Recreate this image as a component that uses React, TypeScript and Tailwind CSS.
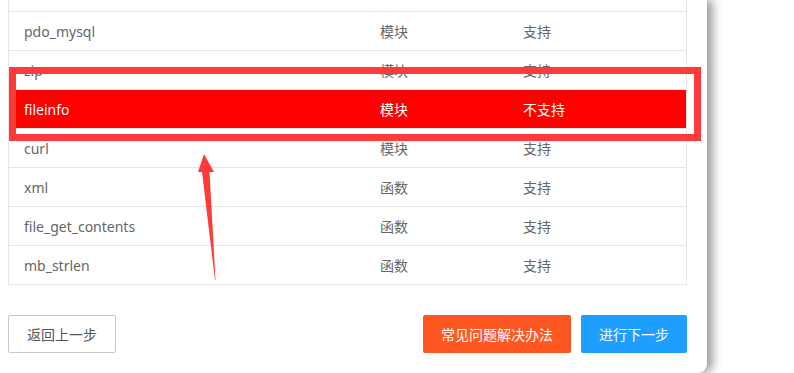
import React from "react";

const rows = [
  { name: "pdo_mysql", type: "模块", ok: true },
  { name: "zip", type: "模块", ok: true },
  { name: "fileinfo", type: "模块", ok: false },
  { name: "curl", type: "模块", ok: true },
  { name: "xml", type: "函数", ok: true },
  { name: "file_get_contents", type: "函数", ok: true },
  { name: "mb_strlen", type: "函数", ok: true },
];

export default function App() {
  return (
    <div
      className="relative h-[373px] w-[794px] overflow-hidden bg-white text-[14px] text-[#666]"
      style={{ fontFamily: '"Noto Sans", "Noto Sans CJK SC", sans-serif' }}
    >
      <div className="-ml-[12px] w-[719px] rounded-br-[9px] bg-white px-5 pb-5 shadow-[6px_0_10px_rgba(0,0,0,0.38)]">
        <div className="border-x border-b border-[#e6e6e6]">
          {/* tail of the row above, scrolled out of view */}
          <div className="h-[11px]" />
          {rows.map((r) => (
            <div
              key={r.name}
              className={
                "flex h-[39px] items-center border-t border-[#e6e6e6] " +
                (r.ok ? "" : "bg-[#ff0000] text-white")
              }
            >
              <div className="w-[371px] pl-[15px]">{r.name}</div>
              <div className="w-[143px]">{r.type}</div>
              <div>{r.ok ? "支持" : "不支持"}</div>
            </div>
          ))}
        </div>
        <div className="mt-[30px] flex items-center">
          <button className="h-[38px] w-[108px] rounded-[2px] border border-[#c9c9c9] bg-white text-[#555]">
            返回上一步
          </button>
          <div className="flex-1" />
          <button className="h-[38px] w-[148px] rounded-[2px] bg-[#ff5722] text-white">
            常见问题解决办法
          </button>
          <button className="ml-[10px] h-[38px] w-[106px] rounded-[2px] bg-[#1e9fff] text-white">
            进行下一步
          </button>
        </div>
      </div>

      {/* annotation: red box */}
      <div className="absolute left-[9px] top-[67px] h-[74px] w-[692px] border-[7px] border-[#ff3a3a]" />

      {/* annotation: arrow */}
      <svg className="absolute left-[190px] top-[150px]" width="40" height="135" viewBox="0 0 40 135">
        <polygon
          points="14,4 24,22 19.5,22 25.5,130 25,130 12,22 8,22"
          fill="#ff3a3a"
        />
      </svg>
    </div>
  );
}
